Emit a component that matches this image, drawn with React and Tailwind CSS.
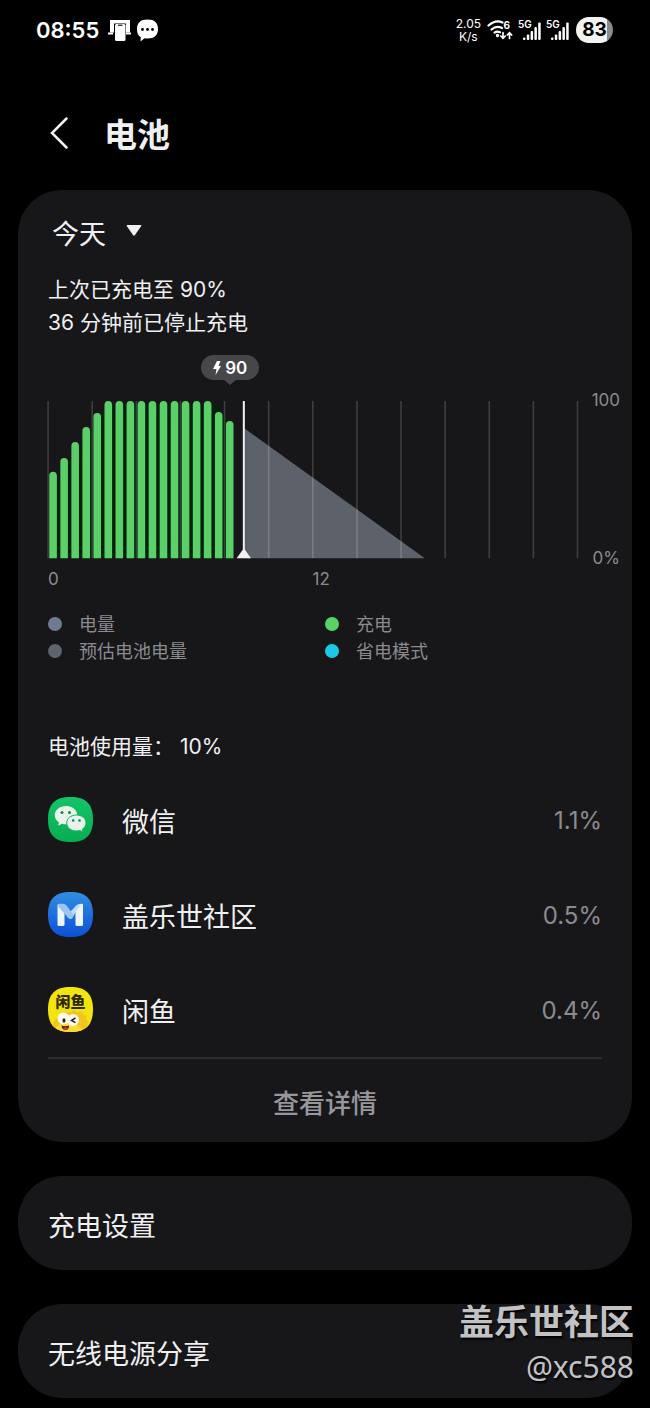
import React, { useState } from "react";

const BAR_TOPS = [72, 58, 42, 27, 13, 1, 1, 1, 1, 1, 1, 1, 1, 1, 1, 12, 21];
const GRID_LINES = [...Array(13).keys()];

const apps = [
  { name: "微信", usage: "1.1%", Icon: WeChatIcon },
  { name: "盖乐世社区", usage: "0.5%", Icon: CommunityIcon },
  { name: "闲鱼", usage: "0.4%", Icon: XianyuIcon },
];

const legend = [
  { label: "电量", color: "bg-[#6f7b92]" },
  { label: "充电", color: "bg-[#56d364]" },
  { label: "预估电池电量", color: "bg-[#5f636b]" },
  { label: "省电模式", color: "bg-[#1cc8e6]" },
];

// rounded "squircle" used by every launcher icon
const SQUIRCLE =
  "M22.5 0C38 0 45 7 45 22.5S38 45 22.5 45 0 38 0 22.5 7 0 22.5 0Z";

function WeChatIcon() {
  return (
    <svg viewBox="0 0 45 45" className="size-[45px]" aria-hidden="true">
      <defs>
        <linearGradient id="wechat" x1="0" y1="0" x2="0" y2="1">
          <stop offset="0" stopColor="#14c468" />
          <stop offset="1" stopColor="#08ad50" />
        </linearGradient>
      </defs>
      <path d={SQUIRCLE} fill="url(#wechat)" />
      <path
        d="M18 9c-6.400 0-11.200 4-11.200 9.200 0 3 1.600 5.500 4.200 7.200l-1 3.300 3.900-2c1.300.4 2.700.6 4.100.6 6.400 0 11.200-4 11.200-9.100S24.400 9 18 9Z"
        fill="#e9f3ec"
      />
      <circle cx="14" cy="15.500" r="1.500" fill="#0f8a48" />
      <circle cx="21.500" cy="15.500" r="1.500" fill="#0f8a48" />
      <path
        d="M28.500 18c-5.600 0-9.800 3.500-9.800 8s4.200 8 9.800 8c1.200 0 2.300-.2 3.400-.5l3.300 1.700-.9-2.900c2.300-1.500 3.700-3.700 3.700-6.300 0-4.500-4.100-8-9.500-8Z"
        fill="#e9f3ec"
        stroke="#10b55a"
        strokeWidth="1"
      />
      <circle cx="25.200" cy="23.500" r="1.300" fill="#0f8a48" />
      <circle cx="31.500" cy="23.500" r="1.300" fill="#0f8a48" />
    </svg>
  );
}

function CommunityIcon() {
  return (
    <svg viewBox="0 0 45 45" className="size-[45px]" aria-hidden="true">
      <defs>
        <linearGradient id="community" x1="0" y1="0" x2="0" y2="1">
          <stop offset="0" stopColor="#2f8fe0" />
          <stop offset="1" stopColor="#0d50d8" />
        </linearGradient>
      </defs>
      <path d={SQUIRCLE} fill="url(#community)" />
      <rect x="9.500" y="12" width="7" height="22" rx="1.500" fill="#eef4fc" />
      <path d="M27.500 14.500q2.500-2.800 7.500-2.800v20.800q0 1.500-1.500 1.500h-4.500q-1.500 0-1.500-1.500Z" fill="#eef4fc" />
      <path d="M28 13.800q2-2 5-2.100L24 26.200q-2 1.600-4-.6l-1.500-1.800Z" fill="#c3dbf6" />
      <path d="M11 11.700h4q2 0 3.500 1.700l7.500 10.100-2 2.700q-2 1.600-4-.6L10 14.500Z" fill="#9cc6f2" />
    </svg>
  );
}

function XianyuIcon() {
  return (
    <svg viewBox="0 0 45 45" className="size-[45px]" aria-hidden="true">
      <clipPath id="xianyu">
        <path d={SQUIRCLE} />
      </clipPath>
      <g clipPath="url(#xianyu)">
        <rect width="45" height="45" fill="#f1e40f" />
        <path
          d="M3 45q1-12 8-15 4-5 12-5l3-2 2 2q6-1 8 3l3 1-1 3 3 3-2 2 1 4-2 4Z"
          fill="#f3c41f"
        />
        <path d="M6 45q2-9 12-10 12 0 18 10Z" fill="#f9dc35" />
        <circle cx="15.500" cy="31.500" r="6" fill="#fffdf2" />
        <circle cx="25" cy="33" r="6" fill="#fffdf2" />
        <ellipse cx="16" cy="33.500" rx="1.500" ry="2.300" fill="#2a2313" />
        <path d="m27.500 31-4 2.400 4 2.200" fill="none" stroke="#2a2313" strokeWidth="1.500" />
        <path d="M13.500 38.500q4 1.500 7.500 0 0 4.500-3.500 4.500t-4-4.500Z" fill="#6d1d12" />
        <ellipse cx="17.500" cy="41.500" rx="2" ry="1" fill="#e0472c" />
        <text
          x="22.500"
          y="19.500"
          textAnchor="middle"
          fontSize="15"
          fontWeight="900"
          fill="#2c2a08"
        >
          闲鱼
        </text>
      </g>
    </svg>
  );
}

function SignalIcon() {
  return (
    <div className="relative h-[21px] w-6">
      <span className="absolute left-0 top-0 text-[10px] leading-[9px] font-semibold">5G</span>
      <svg viewBox="0 0 24 21" className="size-full" fill="#fff" aria-hidden="true">
        <rect x="5" y="17.500" width="2.500" height="2.500" rx="1" />
        <rect x="8.800" y="14.500" width="2.500" height="5.500" rx="1" />
        <rect x="12.600" y="11" width="2.500" height="9" rx="1" />
        <rect x="16.400" y="7" width="2.500" height="13" rx="1" />
        <rect x="20.200" y="2.500" width="2.500" height="17.500" rx="1" />
      </svg>
    </div>
  );
}

function StatusBar() {
  return (
    <div className="flex h-[60px] items-center justify-between pr-[37px] pl-9 text-white">
      <div className="flex items-center gap-2">
        <span className="text-[22px] leading-7 font-semibold">08:55</span>
        <div className="flex items-center gap-1">
          <svg viewBox="0 0 25 24" className="h-6 w-[25px]" aria-hidden="true">
            <path d="M3 2h20v12.500h-4V5.500H7v9H3Z" fill="#fff" />
            <path d="M1 15.500h5M19 15.500h5" stroke="#fff" strokeWidth="2" />
            <rect x="8" y="6" width="10.500" height="17" rx="1.500" fill="#fff" />
            <path d="M11 6.500h4.500v1.500H11Z" fill="#444" />
          </svg>
          <svg viewBox="0 0 23 24" className="h-6 w-[23px]" aria-hidden="true">
            <path
              d="M11.500 1.500C18.500 1.500 22 4.800 22 11s-3.500 9.500-10.500 9.500q-1.600 0-3-.2L4.500 23.500l.3-4.200C2 17.700 1 14.900 1 11c0-6.200 3.500-9.500 10.500-9.500Z"
              fill="#fff"
            />
            <circle cx="6.500" cy="11.500" r="1.400" />
            <circle cx="11.500" cy="11.500" r="1.400" />
            <circle cx="16.500" cy="11.500" r="1.400" />
          </svg>
        </div>
      </div>
      <div className="flex items-center gap-1">
        <div className="mr-0.5 text-center text-xs leading-[13px]">
          <div>2.05</div>
          <div>K/s</div>
        </div>
        <svg viewBox="0 0 27 22" className="h-[22px] w-[27px]" fill="none" stroke="#fff" strokeWidth="2.200" strokeLinecap="round" aria-hidden="true">
          <path d="M1.500 6.500Q8.500 0 15.500 3.500" />
          <path d="M4.500 10.500q5-4.500 10.500-1.500" />
          <path d="M7.500 13.700q2.500-1.800 5.500-.5" />
          <circle cx="10.500" cy="16.500" r=".6" fill="#fff" />
          <path d="M16 13.500v5.500M13.800 17l2.200 2.300 2.200-2.300M22.500 19.500V14M20.300 16l2.200-2.300 2.200 2.300" strokeWidth="1.700" />
          <text x="16.500" y="10" fontSize="10" fontWeight="700" fill="#fff" stroke="none">6</text>
        </svg>
        <SignalIcon />
        <SignalIcon />
        <div className="ml-0.5 flex h-[26px] w-[37px] items-center justify-center rounded-full bg-linear-to-r from-[#f2f2f2] from-83% to-[#8b8b8b] to-83% text-[19px] leading-6 font-bold text-black">
          83
        </div>
      </div>
    </div>
  );
}

function BatteryChart() {
  return (
    <div className="pr-3 pl-7">
      <div className="flex">
        <div className="relative min-w-0 flex-1">
          {/* BATTERY LEVEL TOOLTIP */}
          <div className="absolute bottom-full left-[34%] mb-5 ml-px flex h-[25px] w-[58px] -translate-x-1/2 items-center justify-center gap-1 rounded-full bg-[#47474b] text-[17px] leading-6 font-semibold text-white">
            <svg viewBox="0 0 8 14" className="h-[14px] w-2" fill="#fff" aria-hidden="true">
              <path d="M4 0h3.500L5.500 5H8L2.500 14 3.500 8H0Z" />
            </svg>
            90
            <svg viewBox="0 0 12 5" className="absolute top-full left-1/2 h-[5px] w-3 -translate-x-1/2" fill="#47474b" aria-hidden="true">
              <path d="M0 0h12L6 5Z" />
            </svg>
          </div>
          <svg viewBox="0 0 540 160" className="block h-auto w-full" role="img" aria-label="电量">
            <path d="M11 158.500V80L55 14 66 6H173L187 30V158.500Z" fill="#05200e" />
            <path d="M199 28.500 379.500 158.500H199Z" fill="#5d616a" />
            {GRID_LINES.map((i) => (
              <rect key={i} x={1.3 + i * 44.2} y="1" width="1.600" height="157.500" fill="#fff" fillOpacity=".17" />
            ))}
            {BAR_TOPS.map((top, i) => (
              <path
                key={i}
                transform={`translate(${3.3 + i * 11.06} 0)`}
                d={`M0 158.500V${top + 3.8}a3.800 3.800 0 0 1 7.600 0V158.500Z`}
                fill="#5bd068"
              />
            ))}
            <rect x="197.200" y="1" width="2" height="157" fill="#f2f2f2" />
            <path d="m198.200 148.500 7.200 10h-14.400Z" fill="#f2f2f2" />
          </svg>
        </div>
        <div className="flex w-[35px] flex-col justify-between text-right text-[17px] leading-5 text-[#8b8b8f]">
          <span className="-mt-2.5">100</span>
          <span className="-mb-2">0%</span>
        </div>
      </div>
      <div className="mt-[9px] mr-[43px] grid grid-cols-2 pl-0.5 text-[17px] leading-5 text-[#8b8b8f]">
        <span>0</span>
        <span>12</span>
      </div>
    </div>
  );
}

const App = () => {
  const [day, setDay] = useState("今天");

  return (
    <div className="relative min-h-screen bg-black pb-[10px] font-['Inter','Noto_Sans_CJK_SC',sans-serif] text-[#f0f0f2]">
      <StatusBar />

      {/* HEADER */}
      <header className="flex h-[130px] items-center gap-9 px-[50px] pt-4">
        <button type="button" aria-label="返回">
          <svg viewBox="0 0 18 32" className="h-8 w-[18px]" fill="none" stroke="#f0f0f2" strokeWidth="2.500" strokeLinecap="round" aria-hidden="true">
            <path d="M16.500 1.500 2 16l14.500 14.500" />
          </svg>
        </button>
        <h1 className="pt-1 text-[33px] leading-10 font-bold">电池</h1>
      </header>

      <main className="flex flex-col gap-[34px] px-[18px]">
        <section className="rounded-[44px] bg-[#17171a]">
          <div className="px-[30px] pt-[27px]">
            <label className="relative inline-flex items-center">
              <select
                value={day}
                onChange={(e) => setDay(e.target.value)}
                aria-label="日期"
                className="appearance-none bg-transparent pr-9 pl-1 text-[27px] leading-9 outline-none"
              >
                <option>今天</option>
              </select>
              <svg viewBox="0 0 16 11" className="pointer-events-none absolute top-2 right-0 h-[11px] w-4" fill="#f0f0f2" aria-hidden="true">
                <path d="M1.500 0h13q1.500 0 .6 1.300L9 10q-1 1.300-2 0L.9 1.300Q0 0 1.500 0Z" />
              </svg>
            </label>
            <p className="mt-5 text-[21px] leading-[33px]">
              上次已充电至 90%
              <br />
              36 分钟前已停止充电
            </p>
          </div>

          <div className="mt-[61px]">
            <BatteryChart />
          </div>

          {/* LEGEND */}
          <ul className="mt-[22px] grid grid-cols-2 px-[30px] text-[18px] leading-[27px] text-[#8b8b8f]">
            {legend.map((item) => (
              <li key={item.label} className="flex items-center gap-[17px]">
                <span className={`size-[14px] rounded-full ${item.color}`} />
                {item.label}
              </li>
            ))}
          </ul>

          {/* USAGE */}
          <div className="px-[30px]">
            <h2 className="mt-[65px] text-[21px] leading-[33px]">电池使用量： 10%</h2>
            <ul className="mt-[9px] border-b-2 border-[#2d2d30]">
              {apps.map(({ name, usage, Icon }) => (
                <li key={name} className="flex h-[95px] items-center">
                  <Icon />
                  <span className="ml-[29px] flex-1 pt-2 text-[27px] leading-9">{name}</span>
                  <span className="pt-1 text-[24px] leading-9 text-[#8b8b8f]">{usage}</span>
                </li>
              ))}
            </ul>
            <button
              type="button"
              className="flex h-[83px] w-full items-center justify-center pt-2 text-[26px] leading-9 font-medium text-[#98989c]"
            >
              查看详情
            </button>
          </div>
        </section>

        {["充电设置", "无线电源分享"].map((label) => (
          <button
            key={label}
            type="button"
            className="flex h-[94px] items-center rounded-[44px] bg-[#17171a] px-[30px] pt-2 text-[27px] leading-9"
          >
            {label}
          </button>
        ))}
      </main>

      {/* WATERMARK */}
      <div className="pointer-events-none absolute right-4 bottom-5 text-right text-[#c2c2c4] text-shadow-[1px_2px_2px_#000]">
        <div className="text-[35px] leading-[48px] font-bold">盖乐世社区</div>
        <div className="font-['Noto_Sans',sans-serif] text-[30px] leading-[42px]">@xc588</div>
      </div>
    </div>
  );
};

export default App;
